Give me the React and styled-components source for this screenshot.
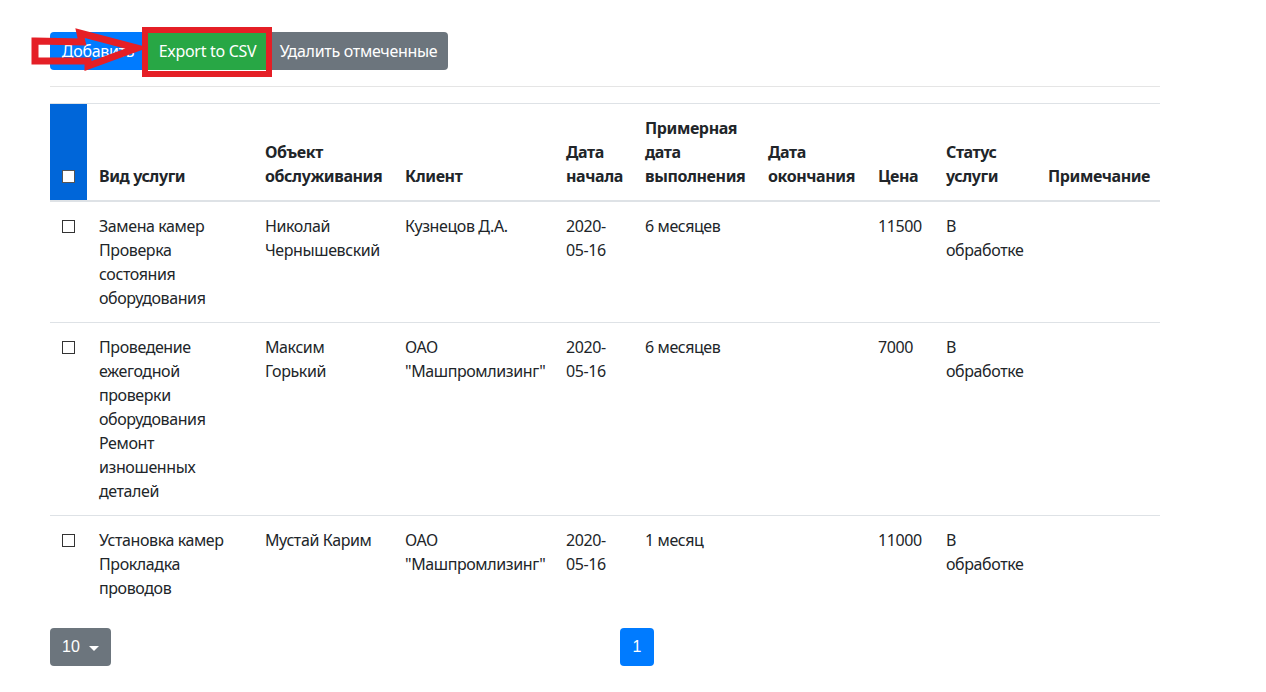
import styled, { createGlobalStyle } from 'styled-components'

const Global = createGlobalStyle`
body {
  margin: 0;
  background: #fff;
  font-family: "Noto Sans", "Open Sans", sans-serif;
  font-size: 16px;
  line-height: 24px;
  color: #212529;
}
`

const Page = styled.div`
width: 1110px;
padding: 32px 0 0 50px;
`

const Toolbar = styled.div`
position: relative;
display: flex;
height: 38px;
`

const Btn = styled.button`
width: ${(p) => p.$w}px;
height: 38px;
border: none;
padding: 0;
color: #fff;
font-family: inherit;
font-size: 16px;
letter-spacing: -0.3px;
background-color: ${(p) => p.$bg};
border-radius: ${(p) => p.$radius};
`

const Frame = styled.div`
position: absolute;
left: 92px;
top: -5px;
width: 130px;
height: 50px;
box-sizing: border-box;
border: 6px solid #e51f26;
pointer-events: none;
`

const Arrow = styled.svg`
position: absolute;
left: -20px;
top: -8px;
pointer-events: none;
`

const Rule = styled.hr`
margin: 16px 0;
border: 0;
border-top: 1px solid rgba(0, 0, 0, 0.1);
`

const Table = styled.table`
width: 1110px;
table-layout: fixed;
border-collapse: collapse;
margin-bottom: 16px;
letter-spacing: -0.4px;
`

const HeadCell = styled.th`
text-align: left;
vertical-align: bottom;
padding: 12px;
font-weight: 700;
border-top: 1px solid #dee2e6;
border-bottom: 2px solid #dee2e6;
background: ${(p) => (p.$select ? '#0066d9' : 'transparent')};
`

const Cell = styled.td`
vertical-align: top;
padding: 12px;
border-top: ${(p) => (p.$first ? 'none' : '1px solid #dee2e6')};
`

const Box = styled.span`
display: inline-block;
width: 13px;
height: 13px;
box-sizing: border-box;
border: 1px solid ${(p) => (p.$head ? '#555' : '#333')};
background: #fff;
vertical-align: -1px;
`

const Footer = styled.div`
display: grid;
grid-template-columns: 1fr 1fr;
`

const SizeBtn = styled.button`
display: flex;
align-items: center;
height: 38px;
padding: 0 12px;
border: none;
border-radius: 4px;
background: #6c757d;
color: #fff;
font-family: "Liberation Sans", Arial, sans-serif;
font-size: 16px;

&::after {
  content: "";
  margin: 2px 0 0 9px;
  border-top: 5px solid #fff;
  border-left: 5px solid transparent;
  border-right: 5px solid transparent;
}
`

const Pages = styled.div`
padding-left: 15px;
`

const PageLink = styled.span`
display: inline-block;
width: 34px;
height: 38px;
line-height: 38px;
text-align: center;
background: #007bff;
color: #fff;
border-radius: 4px;
font-family: "Liberation Sans", Arial, sans-serif;
`

const widths = [37, 166, 140, 161, 79, 123, 110, 68, 102, 124]

const heads = [
  'Вид услуги',
  'Объект обслуживания',
  'Клиент',
  'Дата начала',
  'Примерная дата выполнения',
  'Дата окончания',
  'Цена',
  'Статус услуги',
  'Примечание',
]

const rows = [
  {
    service: 'Замена камер Проверка состояния оборудования',
    object: 'Николай Чернышевский',
    client: 'Кузнецов Д.А.',
    start: '2020-05-16',
    eta: '6 месяцев',
    end: '',
    price: '11500',
    status: 'В обработке',
    note: '',
  },
  {
    service: 'Проведение ежегодной проверки оборудования Ремонт изношенных деталей',
    object: 'Максим Горький',
    client: 'ОАО "Машпромлизинг"',
    start: '2020-05-16',
    eta: '6 месяцев',
    end: '',
    price: '7000',
    status: 'В обработке',
    note: '',
  },
  {
    service: 'Установка камер Прокладка проводов',
    object: 'Мустай Карим',
    client: 'ОАО "Машпромлизинг"',
    start: '2020-05-16',
    eta: '1 месяц',
    end: '',
    price: '11000',
    status: 'В обработке',
    note: '',
  },
]

const App = () => {
  return (
    <Page>
      <Global />
      <Toolbar>
        <Btn $w={96} $bg="#007bff" $radius="4px 0 0 4px">Добавить</Btn>
        <Btn $w={123} $bg="#28a745" $radius="0">Export to CSV</Btn>
        <Btn $w={179} $bg="#6c757d" $radius="0 4px 4px 0">Удалить отмеченные</Btn>
        <Frame />
        {/* hand-drawn red arrow pointing at the export button */}
        <Arrow width="180" height="60" viewBox="0 0 180 60">
          <polygon
            points="5,17 52,18 50,9 107,24 58,42 58,37 5,37"
            fill="none"
            stroke="#e51f26"
            strokeWidth="7"
            strokeLinejoin="miter"
          />
        </Arrow>
      </Toolbar>
      <Rule />
      <Table>
        <colgroup>
          {widths.map((w, i) => (
            <col key={i} style={{ width: w }} />
          ))}
        </colgroup>
        <thead>
          <tr>
            <HeadCell $select>
              <Box $head />
            </HeadCell>
            {heads.map((h) => (
              <HeadCell key={h}>{h}</HeadCell>
            ))}
          </tr>
        </thead>
        <tbody>
          {rows.map((r, i) => (
            <tr key={i}>
              <Cell $first={i === 0}>
                <Box />
              </Cell>
              <Cell $first={i === 0}>{r.service}</Cell>
              <Cell $first={i === 0}>{r.object}</Cell>
              <Cell $first={i === 0}>{r.client}</Cell>
              <Cell $first={i === 0}>{r.start}</Cell>
              <Cell $first={i === 0}>{r.eta}</Cell>
              <Cell $first={i === 0}>{r.end}</Cell>
              <Cell $first={i === 0}>{r.price}</Cell>
              <Cell $first={i === 0}>{r.status}</Cell>
              <Cell $first={i === 0}>{r.note}</Cell>
            </tr>
          ))}
        </tbody>
      </Table>
      <Footer>
        <div>
          <SizeBtn>10</SizeBtn>
        </div>
        <Pages>
          <PageLink>1</PageLink>
        </Pages>
      </Footer>
    </Page>
  )
}

export default App
